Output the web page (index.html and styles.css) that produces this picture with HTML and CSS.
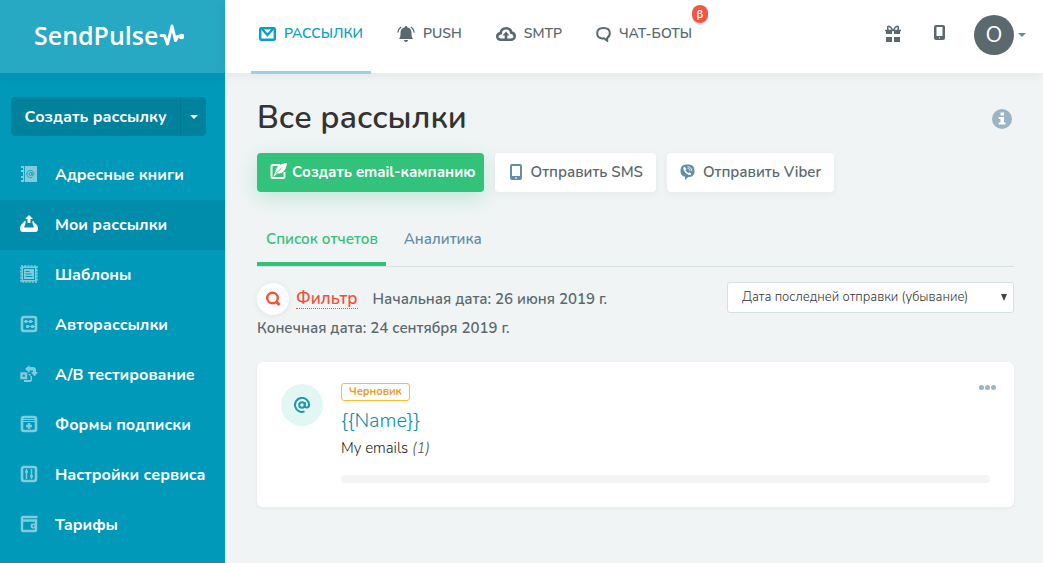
FILE: index.html
```html
<!DOCTYPE html>
<html lang="ru">
<head>
<meta charset="utf-8">
<title>SendPulse</title>
<link rel="stylesheet" href="styles.css">
</head>
<body>
<div class="app">
  <aside class="sidebar">
    <a class="logo" href="#"><span>SendPulse</span><svg width="26" height="26" viewBox="0 0 26 26" fill="none" stroke="#fff" stroke-width="3" stroke-linejoin="round" stroke-linecap="round"><path d="M3 13.500h3.500l3 8.500 4.500-18 3.500 14.500 2-4h3"/><circle cx="23.500" cy="14.500" r="2" fill="#fff" stroke-width="1.500"/></svg></a>
    <div class="create">
      <button class="create-main" type="button">Создать рассылку</button>
      <button class="create-more" type="button" aria-label="Ещё"><span class="caret"></span></button>
    </div>
    <nav class="menu">
      <a href="#"><svg viewBox="0 0 18 18"><path fill="currentColor" d="M3 1h14v16H3zM1 1h2v2H1zM1 5h2v2H1zM1 11h2v2H1zM1 15h2v2H1z"/><g fill="none" stroke="#0099b9" stroke-width=".8"><path d="M4.500 1v16"/><circle cx="10.500" cy="9" r="1.500"/><path d="M12 7v2.500c0 1.500 2 1.200 2-.8a3.600 3.600 0 1 0-1.500 3.300"/></g></svg>Адресные книги</a>
      <a class="active" href="#"><svg viewBox="0 0 18 18"><path fill="currentColor" d="M9 0l4 4h-2.500v4h-3V4H5zM5.500 5.500V8.500L4 12.500h10l-1.500-4v-3c1 .5 1.500 1.500 2 2.500 2 1 3.500 3 3.500 5.500S17 17 15 17H3c-2 0-3-1.500-3-3.500S1 9 3 8c.5-1 1.500-2 2.500-2.500z"/></svg>Мои рассылки</a>
      <a href="#"><svg viewBox="0 0 18 18"><rect x="1.500" y="1.500" width="15" height="15" fill="currentColor"/><rect x="1" y="1" width="16" height="16" fill="none" stroke="currentColor" stroke-width="1.500" stroke-dasharray="2 1.200"/><g fill="none" stroke="#0099b9"><rect x="3.500" y="3.500" width="11" height="11"/><path d="M5.500 6.500h4M5.500 9h6M5.500 11.500h7"/></g></svg>Шаблоны</a>
      <a href="#"><svg viewBox="0 0 18 18" fill="none" stroke="currentColor"><rect x="2" y="2" width="14" height="14" rx="2" stroke-width="2.600"/><path d="M4 6.500h9M6 11.500h9" stroke-width="1.200"/><path fill="currentColor" d="M5 5.500h2v2H5zM9.500 5.500h2v2h-2zM6.500 10.500h2v2h-2zM11.500 10.500h2v2h-2z"/></svg>Авторассылки</a>
      <a href="#"><svg viewBox="0 0 18 18" fill="none" stroke="currentColor" stroke-width="2.400"><path d="M1.500 8.500h4.500v4.500h-4.500z"/><path fill="currentColor" stroke="none" d="M5 4l4.500-4v2H13c2 0 3 1 3 3v2h2l-3.500 4.500L11 7h2V5.500H9.500V8zM8 9h2.500v6H4v2h6c1 0 2-1 2-2v-4h-2z"/></svg>А/В тестирование</a>
      <a href="#"><svg viewBox="0 0 18 18" fill="none" stroke="currentColor"><rect x="2" y="2" width="14" height="14" rx="2" stroke-width="2.600"/><path d="M3 4.500h12M3 6.500h12"/><path stroke-width="2.400" d="M9 8v6M6 11h6"/></svg>Формы подписки</a>
      <a href="#"><svg viewBox="0 0 18 18" fill="none" stroke="currentColor"><rect x="2" y="2" width="14" height="14" rx="2" stroke-width="2.600"/><path stroke-width="1.500" d="M6.500 4v10M11.500 4v10"/><path fill="currentColor" d="M5.500 6h2v1.500h-2zM10.500 10.500h2V12h-2z"/></svg>Настройки сервиса</a>
      <a href="#"><svg viewBox="0 0 18 18" fill="none" stroke="currentColor"><path stroke-width="2.400" d="M17.500 2H3C2 2 2 3 2 3.500v11.500c0 .7.300 1 1 1h12c1 0 1-.5 1-1V5.500H2"/><path stroke-width="1.800" fill="currentColor" d="M16 9.500h-3.500c-1.500 0-1.500 3 0 3H16z"/><circle cx="13.500" cy="11" r=".9" fill="#0099b9" stroke="none"/></svg>Тарифы</a>
    </nav>
  </aside>
  <div class="page">
    <header class="topbar">
      <nav class="tabs">
        <a class="current" href="#"><svg width="17" height="16" viewBox="0 0 17 16" fill="none" stroke="currentColor" stroke-width="2.400"><rect x="1.200" y="2.200" width="14.600" height="11.600" rx="1"/><path d="M3 3l5.500 6L14 3"/></svg>РАССЫЛКИ</a>
        <a href="#"><svg width="18" height="18" viewBox="0 0 18 18" fill="currentColor"><path d="M9 1c.8 0 1.200.5 1.200 1.200C13.300 3 14.500 5 14.500 7.500c0 3 0 4.500 1.500 6.500H2c1.500-2 1.500-3.500 1.500-6.500C3.500 5 4.700 3 7.800 2.200 7.800 1.500 8.200 1 9 1zM7 15h4c0 1.200-1 2-2 2s-2-.8-2-2z"/><path fill="none" stroke="currentColor" stroke-width="1.400" d="M4 2C2 3.500 1 5 .8 7.500M14 2c2 1.500 3 3 3.200 5.500"/></svg>PUSH</a>
        <a href="#"><svg width="20" height="16" viewBox="0 0 20 16" fill="none" stroke="currentColor" stroke-width="2.600"><path d="M5 13.700c-2.500 0-3.700-1.500-3.700-3.200 0-2 1.500-3.200 3.500-3.400C4.800 4 7 2.300 10 2.300s5 1.700 5.200 4.300c2.200.2 3.500 1.500 3.500 3.600s-1.700 3.500-4 3.500z"/><path fill="currentColor" stroke="none" d="M10 5.500l3.500 4h-2.200V13H8.700V9.500H6.500z"/></svg>SMTP</a>
        <a class="beta-tab" href="#"><svg width="15" height="16" viewBox="0 0 15 16" fill="none" stroke="currentColor" stroke-width="2"><path d="M6 12.400C3 12 1.200 10 1.200 7.200 1.200 4 3.500 2 7.500 2s6.300 2 6.300 5.200c0 2-1 3.600-2.600 4.600v3l-3.200-2.500z"/></svg>ЧАТ-БОТЫ<span class="beta">β</span></a>
      </nav>
      <div class="tools">
        <button class="icon-btn" type="button" aria-label="Подарки"><svg width="16" height="17" viewBox="0 0 16 17" fill="#5b696e"><path d="M1 5h6v4H1zM9 5h6v4H9zM1 12h6v5H1zM9 12h6v5H9z"/><path fill="none" stroke="#5b696e" stroke-width="1.600" d="M0 5.500h16M7.500 5C6 2 4 1 3 1.500S3 4 3 5M8.500 5C10 2 12 1 13 1.500S13 4 13 5"/></svg></button>
        <button class="icon-btn phone" type="button" aria-label="Телефон"><svg width="11" height="15" viewBox="0 0 11 15"><rect width="11" height="15" rx="2" fill="#5b696e"/><path fill="#fff" d="M2.500 2h6v9h-6zM5 12.500h1v1H5z"/></svg></button>
        <button class="user" type="button" aria-label="Профиль"><span class="avatar">O</span><span class="caret"></span></button>
      </div>
    </header>
    <main class="main">
      <div class="heading">
        <h1>Все рассылки</h1>
        <button class="info" type="button" aria-label="Справка"><svg width="20" height="20" viewBox="0 0 20 20"><circle cx="10" cy="10" r="10" fill="#9ab3c5"/><path fill="#fff" d="M8.500 3.500h3.500v3H8.500zM6.500 8H12v5.500h1.500v2h-7v-2h2V10h-2z"/></svg></button>
      </div>
      <div class="actions">
        <button class="btn primary" type="button"><svg width="17" height="17" viewBox="0 0 17 17" fill="none" stroke="#fff" stroke-width="2"><path d="M10 2H3C2 2 1.500 2.500 1.500 3.500v10c0 1 .5 1.500 1.500 1.500h10c1 0 1.500-.5 1.500-1.500V9"/><path fill="#fff" stroke="none" d="M17 0C11 .5 6 3 5.500 8.500L3.500 13l1 .5 2.500-3c5 .5 9-2 10-10.500z"/><path stroke="#33c27a" stroke-width=".8" d="M6 10.500l6-6"/></svg>Создать email-кампанию</button>
        <button class="btn sms" type="button"><svg width="12" height="16" viewBox="0 0 12 16"><rect width="12" height="16" rx="2" fill="#648ea4"/><path fill="#fff" d="M2 2h8v10H2zM5 13.500h2v1H5z"/></svg>Отправить SMS</button>
        <button class="btn viber" type="button"><svg width="15" height="16" viewBox="0 0 15 16"><path fill="#648ea4" d="M7.500.5c5 0 7 2 7 6.500 0 4.300-2 6-6.500 6.200L5 16v-3.200C1.800 12 .5 10.300.500 7c0-4.500 2-6.500 7-6.500z"/><path fill="#fff" d="M4.500 2.800c-1.200.5-1.500 1.500-1 2.700 1.200 2.800 3 4.500 5.500 5.500 1.300.4 2-.3 2.300-1.300L9.500 8.200l-1.200.9C7 8.500 6.100 7.400 5.500 6l1-1z"/><path fill="none" stroke="#fff" stroke-width=".9" d="M7.500 2.700c2.500 0 4.300 1.700 4.300 4.300M7.700 4.500c1.400 0 2.300.9 2.300 2.300"/></svg>Отправить Viber</button>
      </div>
      <nav class="subtabs">
        <a class="on" href="#">Список отчетов</a>
        <a href="#">Аналитика</a>
      </nav>
      <div class="filters">
        <div class="filter-info">
          <div class="filter-row">
            <a class="filter" href="#"><span class="filter-icon"><svg width="16" height="16" viewBox="0 0 16 16" fill="none" stroke="#f0533a" stroke-width="2.400"><circle cx="7.500" cy="7" r="5.300"/><path stroke-width="3" d="M11 10.500l3.500 3.500"/></svg></span><span class="filter-text">Фильтр</span></a>
            <span>Начальная дата: 26 июня 2019 г.</span>
          </div>
          <div>Конечная дата: 24 сентября 2019 г.</div>
        </div>
        <div class="sort">
          <select aria-label="Сортировка"><option>Дата последней отправки (убывание)</option></select>
          <svg class="sort-arrow" width="6" height="7" viewBox="0 0 6 7"><path fill="#444" d="M0 0h6L3 7z"/></svg>
        </div>
      </div>
      <article class="card">
        <span class="badge-at"><svg width="16" height="16" viewBox="0 0 16 16" fill="none" stroke="#2297ab" stroke-width="2"><circle cx="8" cy="8" r="2.800"/><path d="M10.800 5v4c0 2.300 4.200 2.200 4.200-1a7 7 0 1 0-4.500 6.400"/></svg></span>
        <div class="card-body">
          <span class="status">Черновик</span>
          <a class="name" href="#">{{Name}}</a>
          <p class="list">My emails <em>(1)</em></p>
          <div class="bar"></div>
        </div>
        <button class="dots" type="button" aria-label="Действия"><i></i><i></i><i></i></button>
      </article>
    </main>
  </div>
</div>
</body>
</html>
```

FILE: styles.css
```css
* { box-sizing: border-box; }
body {
  margin: 0;
  font: 15px/20px Nunito, Lato, "Open Sans", sans-serif;
  color: #5b696e;
  background: #f0f4f5;
}
a { color: inherit; text-decoration: none; }
button { border: 0; padding: 0; margin: 0; background: none; font: inherit; color: inherit; cursor: pointer; }
svg { flex: none; display: block; }
.app { display: flex; min-height: 100vh; }

.sidebar { flex: 0 0 225px; background: #0099b9; color: #fff; font-weight: 700; }
.logo {
  display: flex;
  align-items: center;
  height: 73px;
  padding: 0 0 4px 34px;
  background: #27a8c3;
  box-shadow: 0 2px 12px rgba(0, 60, 80, .08);
  font: 600 25px/32px "Open Sans", sans-serif;
}
.create { display: flex; height: 39px; margin: 24px 19px 14px 11px; border-radius: 4px; overflow: hidden; background: #00829d; }
.create-main { flex: 1; font-size: 16px; }
.create-more { display: flex; align-items: center; justify-content: center; width: 26px; border-left: 1px solid #007690; }
.caret { border: 4px solid transparent; border-top-color: currentColor; border-bottom: 0; }
.menu a { display: flex; align-items: center; height: 50px; padding: 0 0 0 20px; gap: 17px; font-size: 16px; white-space: nowrap; }
.menu svg { width: 18px; height: 18px; margin-bottom: 2px; color: #80ccdc; }
.menu .active { background: #008dac; }
.menu .active svg { color: #fff; }

.page { flex: 1; min-width: 0; }
.topbar {
  display: flex;
  justify-content: space-between;
  height: 73px;
  padding: 0 17px 0 26px;
  background: #fff;
  box-shadow: 0 2px 12px rgba(0, 30, 30, .06);
}
.tabs { display: flex; gap: 18px; }
.tabs a { display: flex; align-items: center; gap: 8px; height: 74px; padding: 0 8px 4px; border-bottom: 3px solid transparent; font-size: 14px; font-weight: 600; }
.tabs .current { color: #0a9fc4; border-color: #93d5e2; }
.beta-tab { position: relative; }
.beta {
  position: absolute;
  top: 5px;
  right: -8px;
  width: 16px;
  height: 18px;
  border-radius: 8px;
  background: #f55540;
  box-shadow: 0 2px 0 #e3e5e6;
  color: #fff;
  font-size: 12px;
  line-height: 18px;
  text-align: center;
}
.tools { display: flex; align-items: center; padding-bottom: 4px; }
.icon-btn { margin: 0 33px 3px 0; }
.icon-btn.phone { margin: 0 29px 5px 0; }
.user { display: flex; align-items: center; gap: 4px; color: #648ea4; }
.avatar { width: 40px; height: 40px; border-radius: 50%; background: #5b696e; color: #fff; font-size: 22px; line-height: 40px; }

.main { padding: 24px 29px 24px 32px; }
.heading { display: flex; align-items: center; justify-content: space-between; height: 40px; }
h1 { margin: 0; padding-top: 2px; font-size: 32px; line-height: 40px; font-weight: 600; color: #333; }
.info { margin: 4px 2px 0 0; }
.actions { display: flex; gap: 11px; margin-top: 16px; }
.btn {
  display: flex;
  align-items: center;
  gap: 9px;
  height: 39px;
  padding: 0 13px 2px 15px;
  border-radius: 4px;
  background: #fff;
  box-shadow: 0 2px 8px rgba(0, 40, 50, .05);
  font-size: 15px;
  font-weight: 600;
  white-space: nowrap;
}
.btn.viber { gap: 8px; padding: 0 13px 2px 13px; }
.btn.primary { gap: 5px; padding: 0 8px 2px 13px; background: #33c27a; color: #fff; font-weight: 700; box-shadow: 0 6px 20px rgba(51, 194, 122, .25); }
.subtabs { display: flex; margin-top: 27px; border-bottom: 1px solid #d6e0e0; font-weight: 600; }
.subtabs a { padding: 10px 8px 13px 9px; margin-right: 9px; border-bottom: 4px solid transparent; color: #648ea4; }
.subtabs .on { color: #33c27a; border-color: #33c27a; }
.filters { display: flex; justify-content: space-between; align-items: flex-start; margin-top: 15px; font-weight: 600; }
.filter-row { display: flex; align-items: center; gap: 15px; height: 34px; margin-bottom: 2px; }
.filter { display: flex; align-items: center; gap: 7px; color: #f0533a; font-size: 17px; }
.filter-icon { display: flex; align-items: center; justify-content: center; width: 32px; height: 32px; border-radius: 50%; background: #fff; box-shadow: 0 1px 6px rgba(0, 40, 50, .08); }
.filter-text { border-bottom: 1px dotted #f0533a; line-height: 18px; }
.sort { position: relative; flex: 0 0 287px; }
.sort select { appearance: none; width: 100%; height: 31px; padding: 0 24px 2px 14px; border: 1px solid #d3e2e1; border-radius: 3px; background: #fff; color: #333; font: 300 13px/20px Nunito, Lato, sans-serif; }
.sort-arrow { position: absolute; right: 7px; top: 12px; }
.card { display: flex; align-items: flex-start; margin-top: 24px; padding: 21px 18px 24px 24px; border-radius: 6px; background: #fff; box-shadow: 0 1px 4px rgba(0, 40, 50, .05); }
.badge-at { display: flex; align-items: center; justify-content: center; flex: none; width: 42px; height: 42px; margin: 1px 18px 0 0; border-radius: 50%; background: #e0f7f4; }
.card-body { flex: 1; display: flex; flex-direction: column; align-items: flex-start; }
.status { height: 18px; padding: 0 7px; border: 1px solid #fbc02d; border-radius: 3px; color: #e5a12d; font-size: 11px; line-height: 16px; font-weight: 700; }
.name { margin-top: 8px; font-size: 20px; line-height: 24px; font-weight: 300; color: #0d8fb0; }
.list { margin: 5px 0 17px; font-weight: 300; color: #222; }
.list em { color: #555; }
.bar { align-self: stretch; height: 8px; border-radius: 4px; background: #f4f4f4; }
.dots { display: flex; gap: 1px; margin: 2px 0 0 -11px; }
.dots i { width: 5px; height: 5px; border-radius: 50%; background: #9ab3c5; }
```
